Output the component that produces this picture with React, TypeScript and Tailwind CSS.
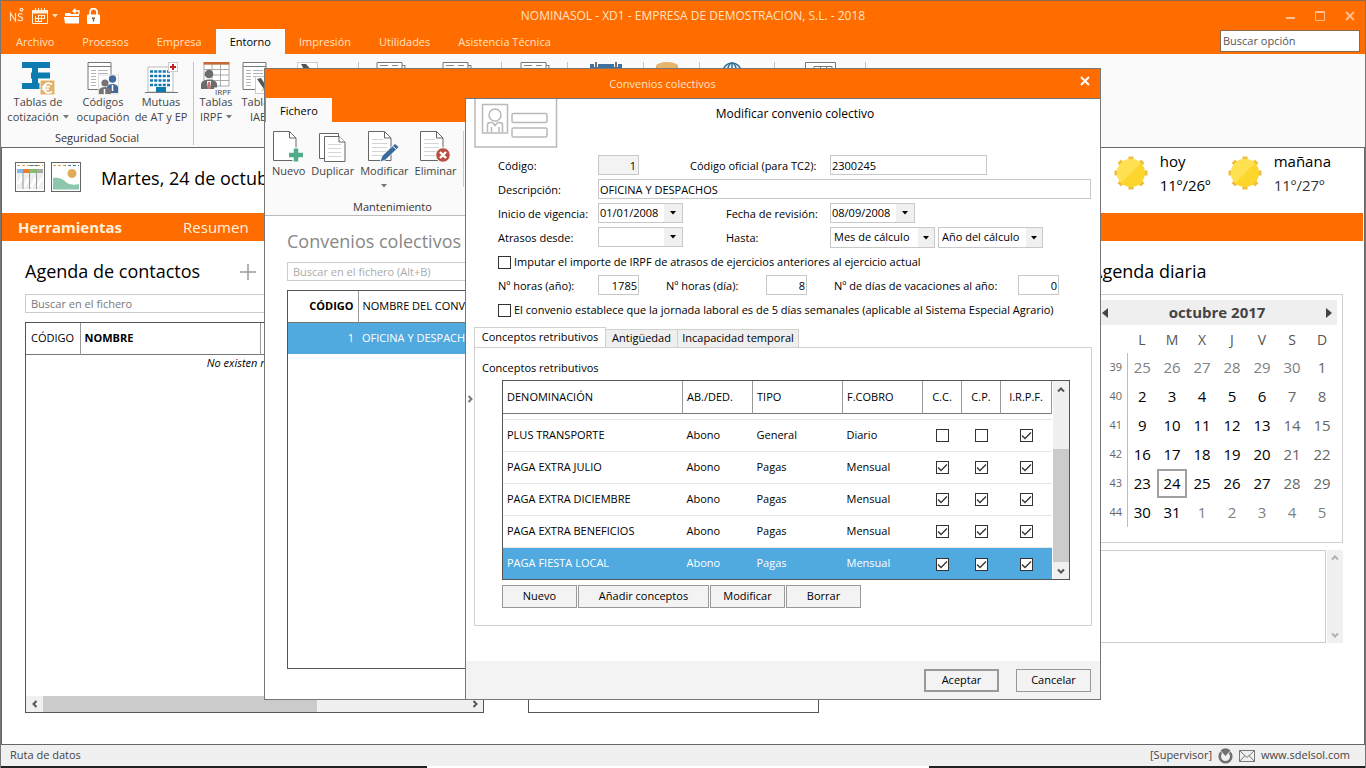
import type { ReactNode } from "react";

type IconProps = {
  className?: string;
};

const inputClass =
  "h-5 border border-[#c8c8c8] bg-white px-px text-[11px] leading-4 outline-none focus:border-blue-500";

const menuTabs = [
  "Archivo",
  "Procesos",
  "Empresa",
  "Entorno",
  "Impresión",
  "Utilidades",
  "Asistencia Técnica",
];

type Concepto = {
  nombre: string;
  abono: string;
  tipo: string;
  cobro: string;
  cc: boolean;
  cp: boolean;
  irpf: boolean;
};

const conceptos: Concepto[] = [
  { nombre: "PLUS TRANSPORTE", abono: "Abono", tipo: "General", cobro: "Diario", cc: false, cp: false, irpf: true },
  { nombre: "PAGA EXTRA JULIO", abono: "Abono", tipo: "Pagas", cobro: "Mensual", cc: true, cp: true, irpf: true },
  { nombre: "PAGA EXTRA DICIEMBRE", abono: "Abono", tipo: "Pagas", cobro: "Mensual", cc: true, cp: true, irpf: true },
  { nombre: "PAGA EXTRA BENEFICIOS", abono: "Abono", tipo: "Pagas", cobro: "Mensual", cc: true, cp: true, irpf: true },
  { nombre: "PAGA FIESTA LOCAL", abono: "Abono", tipo: "Pagas", cobro: "Mensual", cc: true, cp: true, irpf: true },
];

const semanas = [
  { semana: 39, dias: [25, 26, 27, 28, 29, 30, 1] },
  { semana: 40, dias: [2, 3, 4, 5, 6, 7, 8] },
  { semana: 41, dias: [9, 10, 11, 12, 13, 14, 15] },
  { semana: 42, dias: [16, 17, 18, 19, 20, 21, 22] },
  { semana: 43, dias: [23, 24, 25, 26, 27, 28, 29] },
  { semana: 44, dias: [30, 31, 1, 2, 3, 4, 5] },
];

/* ---------- Iconos ---------- */

const Caret = ({ className = "" }: IconProps) => (
  <svg className={className} width="6" height="4" viewBox="0 0 6 4" fill="currentColor" aria-hidden="true">
    <path d="M0 0h6L3 3.5z" />
  </svg>
);

const Chevron = ({ className = "" }: IconProps) => (
  <svg className={className} width="8" height="8" viewBox="0 0 8 8" fill="none" stroke="currentColor" strokeWidth="2" aria-hidden="true">
    <path d="M1 5.5l3-3 3 3" />
  </svg>
);

const LogoIcon = () => (
  <svg width="16" height="18" viewBox="0 0 16 18" fill="none" stroke="#ffe3c2" strokeWidth="1.2" aria-hidden="true">
    <path d="M1.5 14V6l5 8V6" />
    <path d="M13.5 7.5c-1-1.3-4.3-1.1-4.3.7 0 2 4.5 1.3 4.5 3.7 0 2-3.6 2.4-5 .8" />
    <circle cx="12.5" cy="2.8" r="1.4" />
  </svg>
);

const TitleCalendarIcon = () => (
  <svg width="16" height="16" viewBox="0 0 16 16" fill="none" stroke="#fff3e0" aria-hidden="true">
    <path d="M.5 2.5h15v13H.5z" />
    <path d="M0 4h16" strokeWidth="3" />
    <path d="M3.5 0v3M6.5 0v3M9.5 0v3M12.5 0v3" />
    <path d="M3 10.5h10M3 13.5h7M3.5 8v5.5M6.5 7.5v6M9.5 7.5v6M12.5 7.5v3M6 7.5h7" />
  </svg>
);

const FolderIcon = () => (
  <svg width="17" height="16" viewBox="0 0 17 16" aria-hidden="true">
    <path d="M1 5h5l1 1h8v2H1z" fill="#fff" />
    <path d="M0 9h15v6.5H1z" fill="#fff" />
    <path d="M15 6V3H9" fill="none" stroke="#fff" strokeWidth="1.3" />
    <path d="M11.5 0v6L8 3z" fill="#fff" />
  </svg>
);

const LockIcon = () => (
  <svg width="13" height="16" viewBox="0 0 13 16" aria-hidden="true">
    <path d="M3 7V4a3.5 3.5 0 017 0v3" fill="none" stroke="#fff" strokeWidth="1.8" />
    <rect x="0" y="6.5" width="13" height="9.5" rx="1" fill="#fff" />
    <path d="M5 9.5h3v1.5H7.2V13.5H5.8V11H5z" fill="#8a5a30" />
  </svg>
);

const TablasCotizacionIcon = () => (
  <svg width="33" height="33" viewBox="0 0 33 33" aria-hidden="true">
    <path d="M0 0h28v6H0zM9 10.5h19v6H9zM0 21h18v6H0z" fill="#0b7bb0" />
    <path d="M10 6h6v5h-6zM10 16h6v5h-6z" fill="#0b7bb0" />
    <rect x="18" y="18" width="15" height="15" fill="#e2b269" stroke="#fff" />
    <path d="M30 22.5c-4-3-8-.5-8 3.5s4 6.5 8 3.5M20 24.7h8M20 27.3h7" fill="none" stroke="#fff" strokeWidth="1.7" />
  </svg>
);

const CodigosIcon = () => (
  <svg width="33" height="33" viewBox="0 0 33 33" aria-hidden="true">
    <path d="M1 .5h23v27H1z" fill="#fff" stroke="#777" />
    <path d="M1 4.5h23" stroke="#777" />
    <path d="M4 8.5h5M11 8.5h10M4 11.5h5M11 11.5h10M4 14.5h5M11 14.5h8M4 17.5h5M4 20.5h5M4 23.5h5" stroke="#b5b5b5" />
    <rect x="11.5" y="13" width="20" height="19" fill="#fff" stroke="#ddd" />
    <circle cx="25.5" cy="17" r="3.7" fill="#41699d" />
    <path d="M20 31v-6c1-4 10-4 11 0v6z" fill="#41699d" />
    <circle cx="18" cy="21" r="3.6" fill="#747474" />
    <path d="M12 32v-4c1-4 11-4 12 0v4z" fill="#747474" />
    <path d="M17.5 27v5M25.5 23v6" stroke="#fff" strokeWidth="1.5" />
  </svg>
);

const MutuasIcon = () => (
  <svg width="33" height="33" viewBox="0 0 33 33" aria-hidden="true">
    <path d="M3 5h25v25H3z" fill="#fff" stroke="#bbb" />
    <path
      d="M5 9.5h20M5 14h20M5 18.5h20M5 23h20"
      stroke="#1177ad"
      strokeWidth="2.5"
      strokeDasharray="3 1.25"
    />
    <path d="M11 25h10v5H11z" fill="#0b7bb0" />
    <path d="M0 30.5h33" stroke="#777" />
    <rect x="23.5" y=".5" width="9" height="9" fill="#fff" stroke="#ccc" />
    <path d="M28 2v6M25 5h6" stroke="#c52020" strokeWidth="2" />
  </svg>
);

const IrpfIcon = () => (
  <svg width="33" height="33" viewBox="0 0 33 33" aria-hidden="true">
    <path d="M4 2h25v22H4z" fill="#fff" stroke="#aaa" />
    <path d="M4 7.5h25M4 13h25M4 18.5h25M12 2v22M20.5 2v22" stroke="#aaa" />
    <path d="M3.5 0h26v2.5h-26z" fill="#c96a33" />
    <circle cx="9" cy="12" r="4.3" fill="#6c6c6c" />
    <path d="M1 27v-5c1-6 15-6 16 0v5z" fill="#6c6c6c" />
    <path d="M7 19h4l-1 8H8z" fill="#fff" />
    <path d="M9 20v7" stroke="#c52020" strokeWidth="1.3" />
    <rect x="14" y="25.5" width="19" height="8" fill="#fafafa" />
    <text x="15" y="32.5" fontSize="8" fill="#444" fontFamily="Open Sans, sans-serif">IRPF</text>
  </svg>
);

const IaeIcon = () => (
  <svg width="33" height="33" viewBox="0 0 33 33" aria-hidden="true">
    <path d="M1 .5h23v27H1z" fill="#fff" stroke="#777" />
    <path d="M1 4.5h23" stroke="#777" />
    <path d="M4 8.5h5M11 8.5h10M4 11.5h5M11 11.5h10M4 14.5h5M11 14.5h8M4 17.5h5M4 20.5h5M4 23.5h5" stroke="#b5b5b5" />
    <rect x="13.5" y="14.5" width="18" height="17" fill="#fff" stroke="#ccc" />
    <path d="M15 17l4-1 7 11-2 3z" fill="#555" />
    <path d="M19 30l6-9 3 2z" fill="#cf9c3f" />
  </svg>
);

const PenIcon = () => (
  <svg width="22" height="22" viewBox="0 0 22 22" aria-hidden="true">
    <rect x=".5" y=".5" width="20" height="20" fill="#fff" stroke="#ccc" />
    <path d="M4 2h5l8 9-5 6z" fill="#555" />
  </svg>
);

const PaperIcon = () => (
  <svg width="30" height="28" viewBox="0 0 30 28" aria-hidden="true">
    <path d="M26 3.5h3v24H5v-4" fill="none" stroke="#777" />
    <path d="M1 .5h25v24H1z" fill="#fff" stroke="#777" />
    <path d="M4 3.5h8M16 3.5h6M4 6.5h6M4 9.5h6" stroke="#888" />
  </svg>
);

const AgendaIcon = () => (
  <svg width="32" height="30" viewBox="0 0 32 30" aria-hidden="true">
    <path d="M0 2h32v28H0z" fill="#41719c" />
    <path d="M6 0v5M26 0v5" stroke="#fff" strokeWidth="4" />
    <path d="M6 0v5M26 0v5" stroke="#444" strokeWidth="1.5" />
  </svg>
);

const CoinIcon = () => (
  <svg width="22" height="28" viewBox="0 0 22 28" aria-hidden="true">
    <path d="M0 4v20c0 5 22 5 22 0V4z" fill="#d9a152" />
    <ellipse cx="11" cy="4" rx="11" ry="4" fill="#e6b56c" />
  </svg>
);

const GlobeIcon = () => (
  <svg width="20" height="20" viewBox="0 0 20 20" fill="none" stroke="#2f7196" strokeWidth="1.5" aria-hidden="true">
    <circle cx="10" cy="10" r="9" />
    <ellipse cx="10" cy="10" rx="4.5" ry="9" />
    <path d="M10 1v18M1 10h18" />
  </svg>
);

const WindowDocIcon = () => (
  <svg width="31" height="28" viewBox="0 0 31 28" fill="none" stroke="#777" aria-hidden="true">
    <path d="M.5 .5h30v27H.5z" fill="#fff" />
    <path d="M9 4.5h18v16H9zM15.5 4v8M21.5 4v8" />
  </svg>
);

const ScheduleIcon = () => (
  <svg width="30" height="30" viewBox="0 0 30 30" aria-hidden="true">
    <rect x=".5" y=".5" width="29" height="29" fill="#fff" stroke="#666" />
    <path d="M2 3.5h26" stroke="#d7a24a" strokeDasharray="3 2" />
    <path d="M15 3.5h9" stroke="#3a78a8" strokeDasharray="3 2" />
    <path d="M2 7h6v4H2z" fill="#84b9e6" />
    <path d="M8 7h6v4H8z" fill="#ee7b2b" />
    <path d="M14 7h8v4h-8z" fill="#83bd6c" />
    <path d="M22 7h6v4h-6z" fill="#a9a9a9" />
    <path d="M2 11h26v16H2z" fill="#eee" />
    <path d="M3 22l5-8M9 25l5-9M16 25l5-9M22 25l5-9" stroke="#fff" strokeWidth="3" />
    <path d="M8 11v16M14.5 11v16M21.5 11v16" stroke="#999" />
  </svg>
);

const LandscapeIcon = () => (
  <svg width="30" height="30" viewBox="0 0 30 30" aria-hidden="true">
    <rect x=".5" y=".5" width="29" height="29" fill="#fff" stroke="#666" />
    <path d="M2 3.5h26" stroke="#3a78a8" strokeDasharray="3 2" />
    <path d="M2 3.5h12" stroke="#d7a24a" strokeDasharray="3 2" />
    <circle cx="21" cy="11.5" r="4.5" fill="#e2ad5a" />
    <path d="M2 16c7-1 11 2 14 5 4 2 8 2 12 1v5.5H2z" fill="#8cc7ae" />
  </svg>
);

const SunIcon = () => (
  <svg width="34" height="34" viewBox="0 0 34 34" aria-hidden="true">
    <path
      d="M17 .5v33M.5 17h33M5.3 5.3l23.4 23.4M28.7 5.3L5.3 28.7"
      stroke="#eebf3a"
      strokeWidth="5"
    />
    <circle cx="17" cy="17" r="14" fill="#fcd62c" />
    <path d="M7.1 26.9A14 14 0 0126.9 7.1z" fill="#ffe152" />
  </svg>
);

const CardIcon = () => (
  <svg className="block" width="84" height="49" viewBox="0 0 84 49" fill="none" stroke="#b9b9b9" strokeWidth="1.5" aria-hidden="true">
    <path d="M1 0v48h81.5V0" />
    <path d="M8.5 5.5h25V34h-25z" />
    <circle cx="21" cy="16" r="6" />
    <path d="M13.5 33v-7q0-2.5 3-2.5h2l2.5 3 2.5-3h2q3 0 3 2.5v7M17.5 28v5M25 28v5" />
    <rect x="38" y="14.5" width="35" height="9" rx="1.5" />
    <rect x="38" y="29" width="35" height="9" rx="1.5" />
  </svg>
);

const Page = ({ lines = false }: { lines?: boolean }) => (
  <g>
    <path d="M.5 .5H16.5L23 7v22.5H.5z" fill="#fff" stroke="#666" />
    <path d="M16.5 .5V7H23" fill="none" stroke="#666" />
    {lines && (
      <path d="M4 8.5h11M4 12.5h15M4 16.5h15M4 20.5h15M4 24.5h12" stroke="#d5d5d5" />
    )}
  </g>
);

const NuevoIcon = () => (
  <svg width="31" height="32" viewBox="0 0 31 32" aria-hidden="true">
    <Page />
    <path d="M23 16.5v15M15.5 24h15" stroke="#fff" strokeWidth="7" />
    <path d="M23 17.5v13M16 24h14" stroke="#4fac86" strokeWidth="4.5" />
  </svg>
);

const DuplicarIcon = () => (
  <svg width="27" height="32" viewBox="0 0 27 32" fill="#fff" stroke="#666" aria-hidden="true">
    <path d="M.5 2.5h19v25H.5z" />
    <path d="M5.5 5.5H20L26 11v19.5H5.5z" />
    <path d="M20 5.5V11h6" />
    <path d="M9 13.5h13M9 17.5h13M9 21.5h13M9 25.5h13" stroke="#d5d5d5" />
  </svg>
);

const ModificarIcon = () => (
  <svg width="32" height="32" viewBox="0 0 32 32" aria-hidden="true">
    <Page lines />
    <path d="M12 31l2-6L27 12.5l4 3.5-13.5 13z" fill="#3a6a9e" stroke="#fff" strokeWidth=".8" />
    <path d="M24.5 15l4 3.5" stroke="#fff" />
  </svg>
);

const EliminarIcon = () => (
  <svg width="31" height="32" viewBox="0 0 31 32" aria-hidden="true">
    <Page lines />
    <circle cx="23" cy="24" r="7.3" fill="#b94f45" stroke="#fff" />
    <path d="M20 21l6 6M26 21l-6 6" stroke="#fff" strokeWidth="2.4" />
  </svg>
);

const RingIcon = () => (
  <svg width="15" height="16" viewBox="0 0 15 16" aria-hidden="true">
    <circle cx="7.5" cy="8.5" r="5.8" fill="none" stroke="#707070" strokeWidth="2.6" />
    <path d="M1.5 2h12L7.5 10z" fill="#f0f0f0" />
    <path d="M2.5 2.5Q7.5-2 12.5 2.5L7.5 8z" fill="#707070" />
  </svg>
);

const MailIcon = () => (
  <svg width="16" height="12" viewBox="0 0 16 12" fill="none" stroke="#777" aria-hidden="true">
    <path d="M.5 .5h15v11H.5zM.5 .5L8 7.5l7.5-7M.5 11.5L6 5.5M15.5 11.5L10 5.5" />
  </svg>
);

/* ---------- Controles ---------- */

type CheckboxProps = {
  id?: string;
  label?: string;
  checked?: boolean;
};

const Checkbox = ({ id, label, checked = false }: CheckboxProps) => (
  <span className="inline-grid place-items-center align-middle">
    <input
      id={id}
      type="checkbox"
      aria-label={label}
      defaultChecked={checked}
      className="peer size-[13px] appearance-none border border-[#333] bg-white [grid-area:1/1]"
    />
    <svg
      className="pointer-events-none invisible [grid-area:1/1] peer-checked:visible"
      width="11"
      height="9"
      viewBox="0 0 11 9"
      fill="none"
      stroke="#333"
      strokeWidth="1.3"
      aria-hidden="true"
    >
      <path d="M1 4.5l3 3L10 1.5" />
    </svg>
  </span>
);

const DateBox = ({ id, value }: { id: string; value: string }) => (
  <div className="flex h-5 w-[85px] border border-[#c8c8c8] bg-white">
    <input
      id={id}
      defaultValue={value}
      className="w-0 flex-1 px-px text-[11px] leading-4 outline-none"
    />
    <button
      type="button"
      aria-label="Abrir calendario"
      className="flex w-[18px] items-center justify-center bg-[#f0f0f0]"
    >
      <Caret />
    </button>
  </div>
);

const SelectBox = ({ id, label, value }: { id?: string; label?: string; value: string }) => (
  <div className="grid h-[21px] w-[105px] border border-[#c8c8c8] bg-white">
    <select
      id={id}
      aria-label={label}
      className="h-[19px] w-full appearance-none pb-px pl-[3px] text-[11px] leading-4 outline-none [grid-area:1/1]"
    >
      <option>{value}</option>
    </select>
    <span className="pointer-events-none flex w-4 items-center justify-center justify-self-end bg-[#f0f0f0] [grid-area:1/1]">
      <Caret />
    </span>
  </div>
);

type RibbonButtonProps = {
  icon: ReactNode;
  lines?: string[];
  dropdown?: boolean;
  className?: string;
};

const RibbonButton = ({ icon, lines = [], dropdown = false, className = "" }: RibbonButtonProps) => (
  <button
    type="button"
    className={`flex flex-col items-center whitespace-nowrap text-[#444] ${className}`}
  >
    <span className="flex h-8 items-start">{icon}</span>
    {lines.map((line, i) => (
      <span key={line} className="flex items-center gap-1 leading-[15px]">
        {line}
        {dropdown && i === lines.length - 1 && <Caret className="text-[#777]" />}
      </span>
    ))}
  </button>
);

const RibbonGroup = ({ className, children }: { className: string; children?: ReactNode }) => (
  <div className={`flex shrink-0 border-r border-[#c4c4c4] ${className}`}>
    {children}
  </div>
);

/* ---------- Ventana principal ---------- */

const TitleBar = () => (
  <header className="border-t border-[#8a6a4a] bg-[#ff6c00] text-[#ffe3c2]">
    <div className="grid h-[29px] grid-cols-[1fr_auto_1fr] items-center">
      <div className="flex items-center pl-2">
        <LogoIcon />
        <button type="button" aria-label="Calendario" className="ml-[7px] flex items-center gap-1">
          <TitleCalendarIcon />
          <Caret />
        </button>
        <button type="button" aria-label="Abrir" className="ml-1.5"><FolderIcon /></button>
        <button type="button" aria-label="Bloquear" className="ml-1.5"><LockIcon /></button>
      </div>
      <h1 className="pl-5 text-[12px]">NOMINASOL - XD1 - EMPRESA DE DEMOSTRACION, S.L. - 2018</h1>
      <div className="flex items-center justify-end gap-5 pr-2.5 text-[#ffbe8c]">
        <button type="button" aria-label="Minimizar">
          <svg width="9" height="10" viewBox="0 0 9 10" fill="none" stroke="currentColor" strokeWidth="2"><path d="M0 7h9" /></svg>
        </button>
        <button type="button" aria-label="Maximizar">
          <svg width="10" height="10" viewBox="0 0 10 10" fill="none" stroke="currentColor"><path d="M.5 .5h9v9h-9zM0 1.5h10" /></svg>
        </button>
        <button type="button" aria-label="Cerrar">
          <svg width="10" height="10" viewBox="0 0 10 10" fill="none" stroke="currentColor" strokeWidth="2"><path d="M1 1l8 8M9 1L1 9" /></svg>
        </button>
      </div>
    </div>
    <div className="flex h-6 items-end justify-between">
      <nav className="flex pl-px">
        {menuTabs.map((tab) => (
          <button
            key={tab}
            type="button"
            className={
              tab === "Entorno"
                ? "h-[25px] bg-[#fafafa] px-3.5 pt-px text-black"
                : "h-[25px] px-3.5 pt-px"
            }
          >
            {tab}
          </button>
        ))}
      </nav>
      <input
        aria-label="Buscar opción"
        placeholder="Buscar opción"
        className="mr-[5px] mb-0.5 h-[22px] w-[140px] border border-[#8a6a4a] bg-white px-0.5 pb-0.5 placeholder:text-[#555]"
      />
    </div>
  </header>
);

const Ribbon = () => (
  <div className="flex h-[93px] overflow-hidden bg-[#fafafa] pt-2 pb-0.5">
    <div className="flex w-[193px] shrink-0 flex-col justify-between border-r border-[#c4c4c4]">
      <div className="flex">
        <RibbonButton className="w-[74px]" icon={<TablasCotizacionIcon />} lines={["Tablas de", "cotización"]} dropdown />
        <RibbonButton className="w-14" icon={<CodigosIcon />} lines={["Códigos", "ocupación"]} />
        <RibbonButton className="w-[60px]" icon={<MutuasIcon />} lines={["Mutuas", "de AT y EP"]} />
      </div>
      <p className="text-center leading-[14px] text-[#333]">Seguridad Social</p>
    </div>
    <RibbonGroup className="w-[165px]">
      <RibbonButton className="w-11" icon={<IrpfIcon />} lines={["Tablas", "IRPF"]} dropdown />
      <RibbonButton className="w-10" icon={<IaeIcon />} lines={["Tablas", "IAE"]} />
      <RibbonButton className="w-[60px]" icon={<PenIcon />} />
    </RibbonGroup>
    <RibbonGroup className="w-[143px] justify-center gap-9 pr-3">
      <PaperIcon />
      <PaperIcon />
    </RibbonGroup>
    <RibbonGroup className="w-[66px] justify-center"><PaperIcon /></RibbonGroup>
    <RibbonGroup className="w-[76px] justify-center"><AgendaIcon /></RibbonGroup>
    <RibbonGroup className="w-14 pl-3"><CoinIcon /></RibbonGroup>
    <RibbonGroup className="w-[75px] pl-[22px]"><GlobeIcon /></RibbonGroup>
    <RibbonGroup className="w-[91px] justify-center"><WindowDocIcon /></RibbonGroup>
  </div>
);

const dayClass = (day: number, row: number, col: number) => {
  const otherMonth = (row === 0 && day > 20) || (row === 5 && day < 20);

  if (otherMonth) return "text-[#808080]";
  if (col > 4) return "text-[#666]";
  return "text-black";
};

const Calendar = () => (
  <div className="border border-[#d0d0d0] px-[5px] pt-[5px] pb-[15px]">
    <div className="flex h-[25px] items-center justify-between bg-[#efefef] pr-[5px] pl-[5px] text-[#444]">
      <button type="button" aria-label="Mes anterior">
        <svg width="6" height="10" viewBox="0 0 6 10" fill="currentColor"><path d="M6 0v10L0 5z" /></svg>
      </button>
      <span className="text-[15px] font-bold">octubre 2017</span>
      <button type="button" aria-label="Mes siguiente">
        <svg width="6" height="10" viewBox="0 0 6 10" fill="currentColor"><path d="M0 0v10l6-5z" /></svg>
      </button>
    </div>
    <table className="w-full table-fixed border-collapse text-center text-[15px]">
      <thead>
        <tr className="h-[28px] text-[14px] text-[#555]">
          <th aria-label="Semana" />
          {["L", "M", "X", "J", "V", "S", "D"].map((d) => (
            <th key={d} className="font-normal">{d}</th>
          ))}
        </tr>
      </thead>
      <tbody>
        {semanas.map(({ semana, dias }, row) => (
          <tr key={semana} className="h-[29px]">
            <th className="border-r border-[#a5c4d6] pr-0 pl-2 text-[11px] font-normal text-[#666]">{semana}</th>
            {dias.map((dia, col) => (
              <td key={dia} className={`p-0 ${dayClass(dia, row, col)}`}>
                {semana === 43 && dia === 24 ? (
                  <span className="flex h-[29px] items-center justify-center border-2 border-[#a0a0a0]">{dia}</span>
                ) : (
                  dia
                )}
              </td>
            ))}
          </tr>
        ))}
      </tbody>
    </table>
  </div>
);

const Desktop = () => (
  <main className="flex flex-1 flex-col border border-[#666] bg-white">
    <div className="flex h-[65px] items-center pb-2 pl-[13px]">
      <button type="button" aria-label="Planificador"><ScheduleIcon /></button>
      <button type="button" aria-label="Fondo" className="ml-1.5"><LandscapeIcon /></button>
      <p className="ml-5 pt-1 text-[18px]">Martes, 24 de octubre</p>
      <div className="ml-auto flex pr-[33px] pb-2 text-[15px] leading-6">
        <div className="flex w-[114px] items-center gap-3">
          <SunIcon />
          <p>hoy<br />11º/26º</p>
        </div>
        <div className="flex items-center gap-3">
          <SunIcon />
          <p>mañana<br /><span className="text-[#333]">11º/27º</span></p>
        </div>
      </div>
    </div>

    <nav className="mr-px flex h-7 items-center gap-[61px] bg-[#ff6c00] pl-4 text-[15px] text-[#fff0dc]">
      <button type="button" className="font-bold">Herramientas</button>
      <button type="button">Resumen</button>
    </nav>

    <div className="flex flex-1 pr-[21px] pb-[31px] pl-[23px]">
      <section className="flex w-[459px] flex-col">
        <div className="flex h-[53px] items-center pt-2">
          <h2 className="text-[18px]">Agenda de contactos</h2>
          <button type="button" aria-label="Añadir contacto" className="ml-10">
            <svg width="16" height="16" viewBox="0 0 16 16" stroke="#999" strokeWidth="1.5"><path d="M8 0v16M0 8h16" /></svg>
          </button>
        </div>
        <input
          aria-label="Buscar en el fichero"
          placeholder="Buscar en el fichero"
          className="h-[19px] border border-[#ccc] px-[5px] placeholder:text-[#777]"
        />
        <div className="mt-[9px] flex flex-1 flex-col border border-[#555]">
          <table className="w-full table-fixed border-collapse text-left">
            <thead>
              <tr className="h-[31px] border-b border-[#777]">
                <th className="w-[54px] border-r border-[#999] p-0 pl-[5px] font-normal">CÓDIGO</th>
                <th className="w-[180px] border-r border-[#999] p-0 pl-1 font-bold">NOMBRE</th>
                <th />
              </tr>
            </thead>
            <tbody>
              <tr>
                <td colSpan={3} className="p-0 text-center leading-4 italic">No existen registros</td>
              </tr>
            </tbody>
          </table>
          <div className="mt-auto flex h-4 items-center bg-[#f0f0f0] text-[#555]">
            <span className="flex w-[17px] justify-center"><Chevron className="-rotate-90" /></span>
            <span className="h-full w-[274px] bg-[#cbcbcb]" />
            <span className="ml-auto flex w-[17px] justify-center"><Chevron className="rotate-90" /></span>
          </div>
        </div>
      </section>

      <section className="ml-11 flex-1 pt-[53px]">
        <div className="h-full border border-[#555]" />
      </section>

      <section className="ml-[272px] w-[252px]">
        <h2 className="flex h-[53px] items-center pt-2 text-[18px]">Agenda diaria</h2>
        <Calendar />
        <div className="mt-[7px] flex h-[93px]">
          <textarea aria-label="Notas" className="w-0 flex-1 resize-none border border-[#ccc]" />
          <div className="ml-px flex w-4 flex-col items-center justify-between bg-[#f0f0f0] py-1 text-[#b0b0b0]">
            <Chevron />
            <Chevron className="rotate-180" />
          </div>
        </div>
      </section>
    </div>
  </main>
);

const StatusBar = () => (
  <footer>
    <div className="flex h-[21px] items-center bg-[#f0f0f0] pr-[15px] pl-[9px] text-[#444]">
      <span>Ruta de datos</span>
      <span className="ml-auto">[Supervisor]</span>
      <span className="ml-1.5"><RingIcon /></span>
      <span className="ml-1.5"><MailIcon /></span>
      <a href="#web" className="ml-1.5">www.sdelsol.com</a>
    </div>
    <div className="flex h-0.5 bg-[#222] pr-2.5">
      <span className="mx-auto w-[502px] bg-white" />
    </div>
  </footer>
);

/* ---------- Ventana de convenios ---------- */

const FilePanel = () => (
  <div className="flex w-[200px] shrink-0 flex-col overflow-hidden bg-white">
    <div className="flex h-6 bg-[#ff6c00] pl-px">
      <button type="button" className="bg-[#fafafa] px-3.5 pt-0.5">Fichero</button>
    </div>
    <div className="flex h-[94px] w-[255px] flex-col border-b border-[#bbb] bg-[#fafafa] pt-[9px]">
      <div className="flex gap-1.5 pl-[7px]">
        <RibbonButton icon={<NuevoIcon />} lines={["Nuevo"]} />
        <RibbonButton icon={<DuplicarIcon />} lines={["Duplicar"]} />
        <button type="button" className="flex flex-col items-center text-[#444]">
          <span className="h-8"><ModificarIcon /></span>
          <span className="leading-[15px]">Modificar</span>
          <Caret className="mt-1.5 text-[#777]" />
        </button>
        <RibbonButton icon={<EliminarIcon />} lines={["Eliminar"]} />
        <span className="h-14 border-r border-[#ccc]" />
      </div>
      <p className="mt-auto text-center leading-4 text-[#333]">Mantenimiento</p>
    </div>
    <div className="flex w-[400px] flex-1 flex-col pt-[9px] pb-[30px] pl-[22px]">
      <h2 className="h-[37px] text-[18px] leading-8 text-[#888]">Convenios colectivos</h2>
      <input
        aria-label="Buscar en el fichero"
        placeholder="Buscar en el fichero (Alt+B)"
        className="h-[19px] border border-[#ccc] px-[5px] placeholder:text-[#aaa]"
      />
      <div className="mt-[9px] flex-1 border border-[#555]">
        <table className="w-full border-collapse text-left">
          <thead>
            <tr className="h-[31px] border-b border-[#777]">
              <th className="w-[70px] border-r border-[#999] p-0 pr-1 text-right font-bold">CÓDIGO</th>
              <th className="p-0 pl-1 font-normal whitespace-nowrap">NOMBRE DEL CONVENIO</th>
            </tr>
          </thead>
          <tbody>
            <tr className="h-8 bg-[#50a9df] text-white">
              <td className="p-0 pr-1 text-right">1</td>
              <td className="p-0 pl-1 whitespace-nowrap">OFICINA Y DESPACHOS</td>
            </tr>
          </tbody>
        </table>
      </div>
    </div>
  </div>
);

const ConvenioForm = () => (
  <div className="flex flex-col pr-[9px] pl-8 leading-[22px]">
    <div className="flex h-6">
      <label htmlFor="codigo" className="w-[100px]">Código:</label>
      <input id="codigo" defaultValue="1" readOnly className="h-5 w-[41px] border border-[#c8c8c8] bg-[#f3f3f3] px-0.5 text-right leading-4" />
      <label htmlFor="oficial" className="ml-[51px] w-[140px]">Código oficial (para TC2):</label>
      <input id="oficial" defaultValue="2300245" className={`${inputClass} w-[157px]`} />
    </div>
    <div className="flex h-6">
      <label htmlFor="descripcion" className="w-[100px]">Descripción:</label>
      <input id="descripcion" defaultValue="OFICINA Y DESPACHOS" className={`${inputClass} flex-1`} />
    </div>
    <div className="flex h-6">
      <label htmlFor="inicio" className="w-[100px]">Inicio de vigencia:</label>
      <DateBox id="inicio" value="01/01/2008" />
      <label htmlFor="revision" className="ml-[43px] w-[104px]">Fecha de revisión:</label>
      <DateBox id="revision" value="08/09/2008" />
    </div>
    <div className="flex h-6">
      <label htmlFor="atrasos" className="w-[100px]">Atrasos desde:</label>
      <DateBox id="atrasos" value="" />
      <label htmlFor="hasta" className="ml-[43px] w-[104px]">Hasta:</label>
      <SelectBox id="hasta" value="Mes de cálculo" />
      <span className="w-[3px]" />
      <SelectBox label="Hasta año" value="Año del cálculo" />
    </div>
    <div className="flex h-6 items-center gap-[3px] pb-0.5">
      <Checkbox id="imputar" />
      <label htmlFor="imputar">Imputar el importe de IRPF de atrasos de ejercicios anteriores al ejercicio actual</label>
    </div>
    <div className="flex h-6">
      <label htmlFor="horas-anio" className="w-[100px]">Nº horas (año):</label>
      <input id="horas-anio" defaultValue="1785" className={`${inputClass} w-[41px] text-right`} />
      <label htmlFor="horas-dia" className="ml-[27px] w-[100px]">Nº horas (día):</label>
      <input id="horas-dia" defaultValue="8" className={`${inputClass} w-[41px] text-right`} />
      <label htmlFor="vacaciones" className="ml-[27px] w-[184px]">Nº de días de vacaciones al año:</label>
      <input id="vacaciones" defaultValue="0" className={`${inputClass} w-[41px] text-right`} />
    </div>
    <div className="flex h-6 items-center gap-[3px] pb-0.5">
      <Checkbox id="jornada" />
      <label htmlFor="jornada">El convenio establece que la jornada laboral es de 5 días semanales (aplicable al Sistema Especial Agrario)</label>
    </div>
  </div>
);

const ConceptosTable = () => (
  <div className="flex border border-[#555]">
    <table className="flex-1 table-fixed border-collapse text-left">
      <colgroup>
        <col />
        <col className="w-[70px]" />
        <col className="w-[90px]" />
        <col className="w-20" />
        <col className="w-[39px]" />
        <col className="w-[39px]" />
        <col className="w-[51px]" />
      </colgroup>
      <thead>
        <tr className="h-8 border-b border-[#777]">
          {["DENOMINACIÓN", "AB./DED.", "TIPO", "F.COBRO"].map((col) => (
            <th key={col} className="border-r border-[#999] p-0 pl-1 font-normal">{col}</th>
          ))}
          {["C.C.", "C.P.", "I.R.P.F."].map((col) => (
            <th key={col} className="border-r border-[#999] p-0 text-center font-normal">{col}</th>
          ))}
        </tr>
      </thead>
      <tbody>
        <tr className="h-1.5 border-b border-[#e8e8e8]">
          <td colSpan={7} className="p-0" />
        </tr>
        {conceptos.map((c, i) => (
          <tr
            key={c.nombre}
            className={
              i === conceptos.length - 1
                ? "h-8 bg-[#50a9df] text-white"
                : "h-8 border-b border-[#e8e8e8]"
            }
          >
            <td className="p-0 pl-1">{c.nombre}</td>
            <td className="p-0 pl-1">{c.abono}</td>
            <td className="p-0 pl-1">{c.tipo}</td>
            <td className="p-0 pl-1">{c.cobro}</td>
            <td className="p-0 text-center"><Checkbox label={`${c.nombre} C.C.`} checked={c.cc} /></td>
            <td className="p-0 text-center"><Checkbox label={`${c.nombre} C.P.`} checked={c.cp} /></td>
            <td className="p-0 text-center"><Checkbox label={`${c.nombre} I.R.P.F.`} checked={c.irpf} /></td>
          </tr>
        ))}
      </tbody>
    </table>
    <div className="ml-px flex w-4 flex-col items-center bg-[#f0f0f0] text-[#555]">
      <span className="flex h-[17px] items-center"><Chevron /></span>
      <span className="mt-auto h-[113px] w-full bg-[#cbcbcb]" />
      <span className="flex h-[17px] items-center"><Chevron className="rotate-180" /></span>
    </div>
  </div>
);

const EditPanel = () => {
  const actionClass = "h-[23px] border border-[#999] bg-[#f3f3f3]";

  return (
    <section className="relative flex min-w-0 flex-1 flex-col border-t border-l border-[#777] bg-white">
      <button type="button" aria-label="Mostrar panel" className="absolute top-1/2 left-0 text-[#777]">
        <Chevron className="-translate-y-1 rotate-90" />
      </button>

      <div className="grid grid-cols-[91px_1fr_75px] pl-2">
        <CardIcon />
        <h2 className="pt-[7px] text-center text-[12px] leading-4">Modificar convenio colectivo</h2>
      </div>

      <div className="mt-[7px]">
        <ConvenioForm />
      </div>

      <div className="mt-1 mr-2 ml-2">
        <div className="flex items-end" role="tablist">
          <button type="button" role="tab" aria-selected="true" className="h-5 w-[132px] border border-b-0 border-[#d0d0d0] bg-white text-center">
            Conceptos retributivos
          </button>
          <button type="button" role="tab" aria-selected="false" className="h-[18px] w-[72px] border-t border-r border-[#d0d0d0] bg-[#efefef] font-medium">
            Antigüedad
          </button>
          <button type="button" role="tab" aria-selected="false" className="h-[18px] w-[121px] border-t border-r border-[#d0d0d0] bg-[#efefef] font-medium">
            Incapacidad temporal
          </button>
        </div>
        <div className="border border-[#d0d0d0] pt-3 pr-[21px] pb-[17px] pl-[27px]">
          <p className="-ml-5 h-5 leading-4">Conceptos retributivos</p>
          <ConceptosTable />
          <div className="mt-[5px] flex gap-px">
            <button type="button" className={`${actionClass} w-[75px]`}>Nuevo</button>
            <button type="button" className={`${actionClass} w-[131px]`}>Añadir conceptos</button>
            <button type="button" className={`${actionClass} w-[75px]`}>Modificar</button>
            <button type="button" className={`${actionClass} w-[75px]`}>Borrar</button>
          </div>
        </div>
      </div>

      <div className="mt-auto flex h-[38px] items-center justify-end gap-[17px] bg-[#f3f3f3] pr-[9px]">
        <button type="button" className="h-[23px] w-[75px] border-2 border-[#999] bg-[#f3f3f3]">Aceptar</button>
        <button type="button" className="h-[23px] w-[75px] border border-[#999] bg-[#f3f3f3]">Cancelar</button>
      </div>
    </section>
  );
};

const ConveniosDialog = () => (
  <div
    role="dialog"
    aria-label="Convenios colectivos"
    className="absolute inset-y-[68px] right-[265px] left-[264px] flex flex-col border border-[#777] bg-white"
  >
    <div className="grid h-[29px] grid-cols-[1fr_auto_1fr] items-center bg-[#ff6c00] text-[#ffe3c2]">
      <span />
      <h2 className="pr-10 leading-7">Convenios colectivos</h2>
      <button type="button" aria-label="Cerrar" className="mr-2.5 mb-1.5 justify-self-end text-white">
        <svg width="10" height="10" viewBox="0 0 10 10" fill="none" stroke="currentColor" strokeWidth="2"><path d="M1 1l8 8M9 1L1 9" /></svg>
      </button>
    </div>
    <div className="flex min-h-0 flex-1">
      <FilePanel />
      <EditPanel />
    </div>
  </div>
);

const App = () => (
  <div className="relative flex h-screen min-h-[640px] flex-col overflow-hidden bg-[#fafafa] font-['Open_Sans','Noto_Sans',sans-serif] text-[11px] text-black">
    <div className="flex flex-1 flex-col border-x border-[#777]">
      <TitleBar />
      <Ribbon />
      <Desktop />
      <StatusBar />
    </div>
    <ConveniosDialog />
  </div>
);

export default App;
